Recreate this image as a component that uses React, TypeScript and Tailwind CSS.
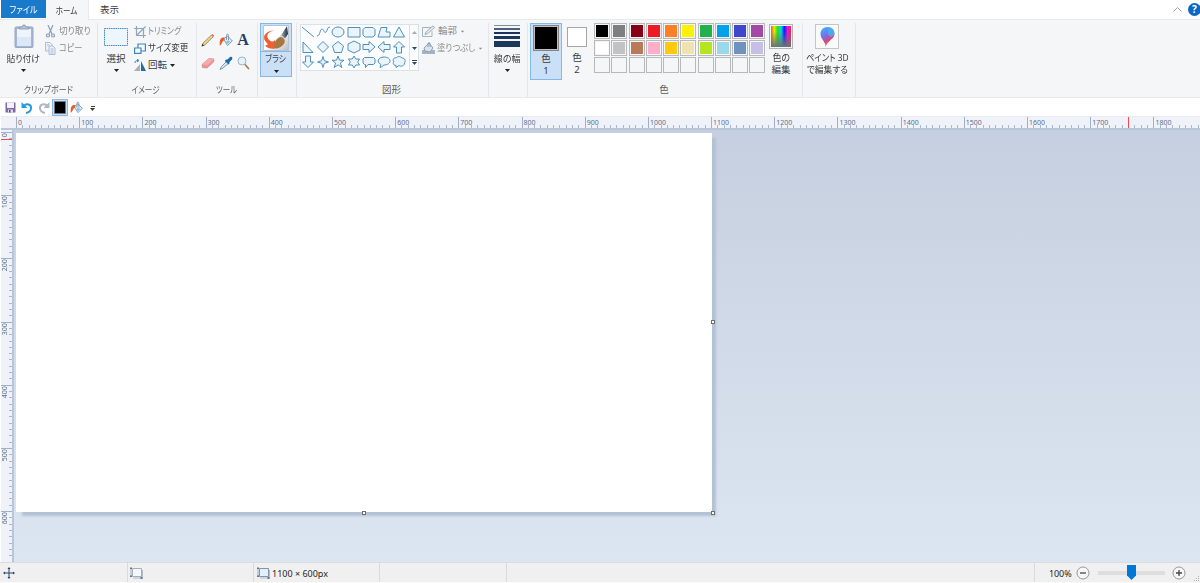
import clsx from "clsx";
import type { ReactNode } from "react";

const UNIT = 63.2;

const paletteTop = [
  '#000000', '#7f7f7f', '#880015', '#ed1c24', '#ff7f27',
  '#fff200', '#22b14c', '#00a2e8', '#3f48cc', '#a349a4',
];
const paletteMiddle = [
  '#ffffff', '#c3c3c3', '#b97a57', '#ffaec9', '#ffc90e',
  '#efe4b0', '#b5e61d', '#99d9ea', '#7092be', '#c8bfe7',
];

const shapes = [
  'M1 2L13 12',
  'M1 11C4 11 4 4 6 4S8 9 10 7S11 2 14 2',
  'M1 7A6 5 0 1 0 13 7A6 5 0 1 0 1 7Z',
  'M1 2.5H13V12H1Z',
  'M3 2.5H11L13 4.5V10L11 12H3L1 10V4.5Z',
  'M4 2.5H10L9 7H13V12H1Z',
  'M7 2L12.500 12H1.500Z',
  'M2 2V12.500H12Z',
  'M7 1.500L12.500 7L7 12.500L1.500 7Z',
  'M7 1.500L12.500 6L10.500 12.500H3.500L1.500 6Z',
  'M7 1L13 4V10L7 13L1 10V4Z',
  'M1 4.500H7V1.500L13 7L7 12.500V9.500H1Z',
  'M13 4.500H7V1.500L1 7L7 12.500V9.500H13Z',
  'M4.500 13V7H1.500L7 1.500L12.500 7H9.500V13Z',
  'M4.500 1V7H1.500L7 12.500L12.500 7H9.500V1Z',
  'M7 1.500L8.300 5.700L12.500 7L8.300 8.300L7 12.500L5.700 8.300L1.500 7L5.700 5.700Z',
  'M7 1L8.500 5.200H13L9.400 8L10.800 12.500L7 9.800L3.200 12.500L4.600 8L1 5.200H5.500Z',
  'M7 1L8.700 4H12.500L10.700 7L12.500 10H8.700L7 13L5.300 10H1.500L3.300 7L1.500 4H5.300Z',
  'M2.500 2.500H11.500L13 4V8L11.500 9.500H6L3.500 12.500V9.500H2.500L1 8V4Z',
  'M4 9.500C-1 7 1 2 7 2C15 2 15 10 7 10C6 10 6 12 3 12.500Z',
  'M4 3C6 1 8 1 10 3C13 3 14 6 12.500 8C12.500 11 9 12 7 10.500L4 12.500V10.500C1 10 .5 8 2 7C0 5 2 2 4 3Z',
];

const Arrow = ({ className }: { className?: string }) => (
  <svg className={clsx("shrink-0", className)} width="5" height="3" viewBox="0 0 5 3">
    <path d="M0 0H5L2.500 3Z" fill="currentColor" />
  </svg>
);

// kana in the UI font are narrower than the kanji, so labels get condensed
const Label = ({ className, children }: { className: string; children: ReactNode }) => (
  <span className={clsx("inline-block", className)}>{children}</span>
);

interface GroupProps {
  width: string;
  label?: ReactNode;
  className?: string;
  children: ReactNode;
}

const Group = ({ width, label, className, children }: GroupProps) => (
  <section className={clsx("flex shrink-0 flex-col border-r border-[#e4e6e9]", width)}>
    <div className={clsx("flex h-[60px] items-start", className)}>{children}</div>
    <div className="flex justify-center pr-[2px] text-[#5c5c5c] leading-[14px]">{label}</div>
  </section>
);

interface BigButtonProps {
  icon: ReactNode;
  label: ReactNode;
  width: string;
  arrow?: boolean;
}

const BigButton = ({ icon, label, width, arrow }: BigButtonProps) => (
  <button className={clsx("flex shrink-0 flex-col items-center pt-px", width)}>
    <span className="flex h-[29px] items-start justify-center">{icon}</span>
    <span className="leading-[12px]">{label}</span>
    {arrow && <Arrow className="mt-[4px] text-[#222]" />}
  </button>
);

const Swatch = ({ color }: { color?: string }) => (
  <span className="block h-[16px] w-[16px] border border-[#b9b9b9] bg-[#f5f6f7] p-px">
    <span className="block h-full w-full" style={{ backgroundColor: color }} />
  </span>
);

const BucketIcon = ({ size = 14 }: { size?: number }) => (
  <svg width={size} height={size} viewBox="0 0 14 14" fill="none">
    <path d="M4.500 6L8.500 3L13.300 8L8.500 12.500Z" fill="#e3eff8" stroke="#6f91ad" strokeWidth=".9" />
    <path d="M7.500 7V2.500C7.500 .6 9.500 .6 9.500 2.500V7" stroke="#7790a7" strokeWidth=".9" />
    <path d="M5.500 4.500C2 4 .3 6 .8 12.500C2.800 12.500 2.500 8.500 5.500 7Z" fill="#e95d2b" />
    <path d="M8.500 7.500L11.500 8L8.500 11L6.800 9Z" fill="#8bbfe5" />
  </svg>
);

const SizeIcon = ({ pale }: { pale?: boolean }) => (
  <svg width="13" height="12" viewBox="0 0 13 12" fill="none">
    <path d="M2.500 1.500H11.500V9.500H2.500Z" fill={pale ? '#f5f7f9' : '#dff1f9'} stroke={pale ? '#a3afc0' : '#8194ab'} />
    <path d="M3 11H12.500V3" stroke="#b0bac8" />
    <path d="M1 1V9" stroke="#8a99ac" strokeWidth=".8" />
    <path d="M0 .5H2V2H0ZM0 8.500H2V10H0ZM10.500 10H12.500V12H10.500Z" fill="#62758d" />
  </svg>
);

const Clipboard = () => (
  <Group width="w-[97px]" label={<Label className="scale-x-[.84]">クリップボード</Label>} className="pl-px">
    <BigButton
      width="w-[43px]"
      label={<Label className="scale-x-[.92]">貼り付け</Label>}
      arrow
      icon={
        <svg width="20" height="25" viewBox="0 0 20 25">
          <rect x="1" y="3" width="18" height="20.500" rx="1" fill="#a7b6d1" stroke="#98a8c5" />
          <path d="M3 5H17V22H3Z" fill="#edf4fc" />
          <path d="M3 13H17V22H3Z" fill="#dce8f6" />
          <path d="M5 5V3H8L9 1H11L12 3H15V5Z" fill="#b7c2d5" stroke="#8796b1" strokeWidth=".8" />
        </svg>
      }
    />
    <div className="flex flex-col text-[#8b8b8b]">
      <button className="flex h-[17px] items-center gap-[4px]">
        <svg className="ml-px" width="9" height="13" viewBox="0 0 9 13" fill="none" stroke="#8e9cb8" strokeWidth="1.200">
          <path d="M2 0L6 9M7 0L3 9" />
          <circle cx="2" cy="10.500" r="1.500" />
          <circle cx="7" cy="10.500" r="1.500" />
        </svg>
        <Label className="origin-left scale-x-[.91]">切り取り</Label>
      </button>
      <button className="flex h-[17px] items-center gap-[3px]">
        <svg width="11" height="13" viewBox="0 0 11 13" fill="#eaf0f8" stroke="#a8b7ce" strokeWidth=".9">
          <path d="M.5 .5H5L7 2.500V9H.5Z" />
          <path d="M4 4H8L10 6V12.500H4Z" />
          <path d="M5.500 7H8.500M5.500 9H8.500M5.500 11H8.500M2 3H4" />
        </svg>
        <Label className="origin-left scale-x-[.86]">コピー</Label>
      </button>
    </div>
  </Group>
);

const ImageTools = () => (
  <Group width="w-[99px]" label={<Label className="scale-x-[.8]">イメージ</Label>} className="pl-[6px]">
    <BigButton
      width="w-[24px]"
      label="選択"
      arrow
      icon={
        <svg className="mt-[4px]" width="24" height="18" viewBox="0 0 24 18">
          <rect x=".5" y=".5" width="23" height="17" fill="#eef6fd" stroke="#3d8ac4" strokeDasharray="1.500 .7" />
        </svg>
      }
    />
    <div className="ml-[6px] flex flex-col">
      <button className="flex h-[17px] items-center gap-[2px] text-[#8b8b8b]">
        <svg width="12" height="12" viewBox="0 0 12 12" fill="none" stroke="#91a4bd" strokeWidth="1.200">
          <path d="M2.500 0V9.500H12M0 2.500H9.500V12M2.500 9.500L11.500 .5" />
        </svg>
        <Label className="origin-left scale-x-[.83]">トリミング</Label>
      </button>
      <button className="flex h-[17px] items-center gap-[2px]">
        <svg width="12" height="11" viewBox="0 0 12 11" fill="#f3faff" stroke="#4188b9" strokeWidth="1.200">
          <path d="M4 1H11.400V8H4Z" />
          <path d="M.6 5H7V10.400H.6Z" />
        </svg>
        <Label className="origin-left scale-x-[.9]">サイズ変更</Label>
      </button>
      <button className="flex h-[16px] items-center gap-[2px]">
        <svg width="12" height="12" viewBox="0 0 12 12">
          <path d="M6 5V12H0Z" fill="#a9b2bb" />
          <path d="M7 2V12H12Z" fill="#286b9d" />
          <path d="M1 4C1 2 2 1.500 4 1.500M3 0L5 1.500L3 3" fill="none" stroke="#2288d8" />
        </svg>
        回転
        <Arrow className="ml-px text-[#222]" />
      </button>
    </div>
  </Group>
);

const Tools = () => (
  <Group width="w-[61px]" label={<Label className="scale-x-[.78]">ツール</Label>} className="pl-[2px] pt-[5px]">
    <div className="grid grid-cols-[18px_18px_16px] grid-rows-[23px_24px] justify-items-center items-center">
      <svg width="14" height="14" viewBox="0 0 14 14">
        <path d="M1 13L2 10.200L10.500 2L12.200 3.700L3.800 12Z" fill="#f0d791" stroke="#8f7440" strokeWidth=".8" />
        <path d="M10.500 2L11.500 1L13.300 2.800L12.200 3.700Z" fill="#d96b6f" />
        <path d="M.5 13.500L1.500 10.800L3.200 12.500Z" fill="#43382b" />
      </svg>
      <BucketIcon />
      <span className="font-['Liberation_Serif'] text-[16px] font-bold leading-none text-[#1f3f65]">A</span>
      <svg width="14" height="14" viewBox="0 0 14 14">
        <path d="M1 8.500L8 2.500L13 3L12.500 6L6 12L1.500 11.500Z" fill="#ee9496" stroke="#d08486" strokeWidth=".7" />
        <path d="M1 8.500L6.500 9L13 3L8 2.500Z" fill="#f4adac" />
      </svg>
      <svg width="14" height="14" viewBox="0 0 14 14">
        <path d="M8 5L10 7L4 12L1 13.500L2.500 10.500Z" fill="#d7e7f1" stroke="#66849b" strokeWidth=".8" />
        <path d="M7 3.500L8.500 3.500L11 1C13 0 14 2 13 3.500L10.500 6V7.500L9.500 8.500L5.800 5Z" fill="#1c69a8" />
      </svg>
      <svg width="13" height="14" viewBox="0 0 13 14">
        <path d="M8 8.500L11.500 12.500" stroke="#aa7e4b" strokeWidth="1.800" strokeLinecap="round" />
        <circle cx="5" cy="5" r="4" fill="#e4f3fb" stroke="#a3b3bd" />
      </svg>
    </div>
  </Group>
);

const Brushes = () => (
  <Group width="w-[39px]" className="pl-[2px]">
    <button className="flex h-[54px] w-[32px] flex-col items-center border border-[#84b8ec] bg-[#c9e0f7]">
      <span className="flex h-[28px] w-full justify-center border-b border-[#84b8ec] pt-px">
        <svg width="26" height="26" viewBox="0 0 26 26">
          <defs>
            <linearGradient id="tile" x1="0" y1="0" x2="1" y2="1">
              <stop offset=".5" stopColor="#fff" />
              <stop offset="1" stopColor="#b8bec2" />
            </linearGradient>
            <linearGradient id="handle">
              <stop stopColor="#b8c3ca" />
              <stop offset="1" stopColor="#172d45" />
            </linearGradient>
          </defs>
          <path d="M.5 .5H25.500V25.500H.5Z" fill="url(#tile)" stroke="#b8c3cc" />
          <path d="M11 5.500C2 6 -1 12 2.500 16.500C5 19.500 6 20 2 20.500C5 24 12 25 14 22L12 15C9 18 7 16 5 13.500C3 10 5 7 11 5.500Z" fill="#ed6034" />
          <path d="M17 12L24 1L25 9L21 15Z" fill="url(#handle)" />
          <path d="M16 12L18 10L22.500 13.500L21 16Z" fill="#d9dddd" />
          <path d="M11 23C11 17 14 12 18 12C22 13 23 17 20 20C17 23 14 24 11 23Z" fill="#a77643" />
        </svg>
      </span>
      <span className="mt-px leading-[12px]"><Label className="scale-x-[.83]">ブラシ</Label></span>
      <Arrow className="mt-[5px] text-[#222]" />
    </button>
  </Group>
);

const ShapeTools = () => (
  <Group width="w-[192px]" label="図形" className="pl-[3px] pt-px">
    <div className="flex h-[47px] w-[119px] shrink-0 overflow-hidden border border-[#dce1e6] bg-[#fbfcfd]">
      <div className="grid w-[108px] shrink-0 grid-cols-[repeat(7,15.2px)] grid-rows-[repeat(3,15px)]">
        {shapes.map((d, i) => (
          <svg key={i} width="14" height="14" viewBox="0 0 14 14">
            <path d={d} fill={i < 2 ? 'none' : '#eaf5fb'} stroke="#4989b6" strokeWidth=".95" />
          </svg>
        ))}
      </div>
      <div className="flex grow flex-col items-center border-l border-[#dce1e6] text-[#33475c]">
        <Arrow className="mt-[6px] rotate-180 text-[#a6abb2]" />
        <Arrow className="mt-[13px]" />
        <span className="mt-[10px] h-px w-[5px] bg-current" />
        <Arrow className="mt-px" />
      </div>
    </div>
    <div className="ml-[3px] flex flex-col text-[#8b8b8b]">
      <button className="flex h-[14px] items-center gap-[3px]">
        <svg width="13" height="12" viewBox="0 0 13 12" fill="none">
          <path d="M10 6V11.500H.5V2.500H9" stroke="#a5b4c5" />
          <path d="M3 9.500L4 7L11 .8L12.500 2.500L5.500 8.700Z" fill="#e8edf2" stroke="#8999ae" strokeWidth=".8" />
        </svg>
        輪郭
        <Arrow className="scale-75" />
      </button>
      <button className="flex h-[20px] items-center gap-[2px]">
        <svg width="13" height="12" viewBox="0 0 13 12">
          <path d="M0 8H13V12H0Z" fill="#a4b3c7" />
          <path d="M2 6L7 1L11 6L8 10L3 9Z" fill="#dbe3ed" stroke="#8d9eb5" />
          <path d="M6 5V2C6 0 8 0 8 2V5" fill="none" stroke="#8d9eb5" />
        </svg>
        <Label className="-mr-[5px] origin-left scale-x-[.88]">塗りつぶし</Label>
        <Arrow className="scale-75" />
      </button>
    </div>
  </Group>
);

const Colors = () => (
  <Group width="w-[275px]" label="色" className="pl-[2px]">
    <button className="flex h-[57px] w-[32px] flex-col items-center border border-[#84b8ec] bg-[#c9e0f7] pt-px">
      <span className="h-[26px] w-[26px] border border-[#858585] bg-[#bfbfbf] p-px">
        <span className="block h-full w-full bg-black" />
      </span>
      <span className="mt-[2px] leading-[12px]">色</span>
      <span className="leading-[12px]">1</span>
    </button>
    <button className="ml-[5px] flex w-[20px] flex-col items-center pt-[4px]">
      <span className="h-[20px] w-[20px] border border-[#a6a6a6] bg-white" />
      <span className="mt-[5px] leading-[12px]">色</span>
      <span className="leading-[12px]">2</span>
    </button>
    <div className="ml-[7px] grid grid-cols-[repeat(10,17.250px)] grid-rows-[17px_17px_16px]">
      {paletteTop.map((color) => <Swatch key={color} color={color} />)}
      {paletteMiddle.map((color) => <Swatch key={color} color={color} />)}
      {paletteTop.map((color) => <Swatch key={color} />)}
    </div>
    <button className="ml-[2px] flex w-[25px] flex-col items-center pt-px">
      <span className="h-[25px] w-[24px] border border-[#b3b3b3] p-px">
        <span className="block h-full bg-[linear-gradient(transparent_25%,#6a7472),linear-gradient(90deg,#f05a28,#e4ee00,#23dd21,#00dce1,#1515ff,#e419d5,#ff1739)]" />
      </span>
      <span className="mt-[3px] leading-[12px]"><Label className="scale-x-[.94]">色の</Label></span>
      <span className="leading-[12px]">編集</span>
    </button>
  </Group>
);

const Ribbon = () => (
  <div className="flex h-[79px] border-y border-[#e8e9ea] bg-[#f5f6f7] pl-px pt-[3px]">
    <Clipboard />
    <ImageTools />
    <Tools />
    <Brushes />
    <ShapeTools />
    <Group width="w-[39px]" className="pl-[3px]">
      <BigButton
        width="w-[30px]"
        label={<Label className="scale-x-[.94]">線の幅</Label>}
        arrow
        icon={
          <span className="mt-px flex w-[26px] flex-col">
            <span className="h-px bg-[#7d918f]" />
            <span className="mt-[2px] h-[2px] bg-[#4b5e80]" />
            <span className="mt-[2px] h-[2px] bg-[#1d315c]" />
            <span className="mt-[2px] h-[3px] bg-[#1d385d]" />
            <span className="mt-[2px] h-[6px] bg-[#1d385d]" />
          </span>
        }
      />
    </Group>
    <Colors />
    <Group width="w-[53px]" className="justify-center pr-[3px]">
      <button className="flex flex-col items-center pt-px">
        <span className="flex h-[25px] w-[24px] items-center justify-center border border-[#c5c5c5] bg-[#fafafa]">
          <svg width="15" height="20" viewBox="0 0 15 20">
            <defs>
              <linearGradient id="pin" x1=".2" y1="0" x2=".6" y2="1">
                <stop stopColor="#35b8f4" />
                <stop offset=".4" stopColor="#7970ec" />
                <stop offset=".7" stopColor="#d4487e" />
                <stop offset="1" stopColor="#f5b33a" />
              </linearGradient>
            </defs>
            <path d="M7.500 0C12 0 14.500 3 14.500 7C14.500 12 8 13 5.500 20C6 15 .5 12 .5 7C.5 3 3 0 7.500 0Z" fill="url(#pin)" />
            <path d="M8 0C13 0 15 4 14 8C12 11 9 10 8 7C7 4 10 3 8 0Z" fill="#30c7f2" opacity=".65" />
          </svg>
        </span>
        <span className="mt-[3px] leading-[12px]"><Label className="scale-x-[.88]">ペイント 3D</Label></span>
        <span className="leading-[12px]"><Label className="scale-x-[.92]">で編集する</Label></span>
      </button>
    </Group>
  </div>
);

const QuickAccess = () => (
  <div className="flex h-[17px] items-center pl-[5px]">
    <svg width="11" height="11" viewBox="0 0 11 11">
      <path d="M.5 .5H10.500V10.500H.5Z" fill="#8068a6" />
      <path d="M2 .5H9V6H2Z" fill="#f3f3f8" />
      <path d="M3 7.500H8V10.500H3Z" fill="#dcdde8" />
      <path d="M4 8H5.500V10.500H4Z" fill="#54457c" />
    </svg>
    <svg className="ml-[5px]" width="12" height="12" viewBox="0 0 12 12" fill="none" stroke="#249bdc" strokeWidth="2">
      <path d="M3 3.500C7 1 10.500 3 10 6.500C9.700 9 7.500 10.500 5 11" />
      <path d="M.5 0V6H6.500Z" fill="#249bdc" stroke="none" />
    </svg>
    <svg className="ml-[5px]" width="12" height="12" viewBox="0 0 12 12" fill="none" stroke="#acb8c8" strokeWidth="2">
      <path d="M9 3.500C5 1 1.500 3 2 6.500C2.300 9 4.500 10.500 7 11" />
      <path d="M11.500 0V6H5.500Z" fill="#acb8c8" stroke="none" />
    </svg>
    <span className="ml-[2px] h-[17px] w-[16px] border border-[#84b8ec] bg-[#c9e0f7] p-px">
      <span className="block h-full border border-[#777] bg-black" />
    </span>
    <span className="ml-[2px]"><BucketIcon size={13} /></span>
    <span className="ml-[7px] flex flex-col items-center gap-px pt-px">
      <span className="h-px w-[4px] bg-[#444]" />
      <Arrow />
    </span>
  </div>
);

const TopRuler = () => (
  <div className="relative ml-px flex h-[14px] overflow-hidden border-b-2 border-t border-b-[#b9c5d8] border-t-[#e8ebf0] bg-[#f0f2f9] pl-[15px]">
    {Array.from({ length: 19 }, (_, i) => (
      <div key={i} className="flex shrink-0 flex-col justify-between border-l border-[#9fb0c8]" style={{ width: UNIT }}>
        <span className="h-[8px] pl-px text-[7px] leading-[11px] text-[#5e6f8c]">{i * 100}</span>
        <span className="flex h-[3px] justify-evenly">
          {Array.from({ length: 9 }, (_, n) => (
            <span key={n} className="w-px bg-[#a9b8ce]" />
          ))}
        </span>
      </div>
    ))}
    <span className="absolute left-[1127px] top-0 h-[12px] w-px bg-[#f04b4b]" />
  </div>
);

const SideRuler = () => (
  <div className="relative ml-px flex w-[13px] shrink-0 flex-col overflow-hidden border-r-2 border-[#b9c5d8] bg-[#f0f2f9] pt-[2px]">
    {Array.from({ length: 7 }, (_, i) => (
      <div key={i} className="flex shrink-0 justify-between border-t border-[#9fb0c8]" style={{ height: UNIT }}>
        <span className="w-[8px] rotate-180 text-right text-[7px] leading-[8px] text-[#5e6f8c] [writing-mode:vertical-rl]">
          {i * 100}
        </span>
        <span className="flex w-[3px] flex-col justify-evenly">
          {Array.from({ length: 9 }, (_, n) => (
            <span key={n} className="h-px bg-[#a9b8ce]" />
          ))}
        </span>
      </div>
    ))}
    <span className="absolute left-0 top-[9px] z-10 h-px w-[12px] bg-[#f04b4b]" />
  </div>
);

const Handle = ({ className }: { className: string }) => (
  <span className={clsx("absolute h-[4px] w-[4px] border border-[#6d6d6d] bg-white", className)} />
);

const Workspace = () => (
  <div className="flex h-[432px]">
    <SideRuler />
    <main className="grow bg-linear-to-b from-[#c5cfdf] to-[#dce6f2] pl-[2px] pt-[3px]">
      <div className="relative h-[379px] w-[696px]">
        <div className="absolute left-[6px] top-[5px] h-[378px] w-[694px] bg-[#b3c1d5] blur-[1px]" />
        <div className="relative h-full bg-white" />
        <Handle className="left-[695px] top-[187px]" />
        <Handle className="left-[346px] top-[378px]" />
        <Handle className="left-[695px] top-[378px]" />
      </div>
    </main>
  </div>
);

const StatusBar = () => (
  <footer className="flex h-[21px] items-center border-b border-t border-b-[#fafafa] border-t-[#dcdcdc] bg-[#f0f0f0] font-['Noto_Sans'] text-[9px] text-[#262626]">
    <div className="flex h-full w-[128px] items-center border-r border-[#dadada] pl-[3px]">
      <svg width="12" height="12" viewBox="0 0 12 12" fill="#254568">
        <path d="M6 1V11M1 6H11" stroke="#254568" />
        <path d="M4.500 2L6 0L7.500 2ZM4.500 10L6 12L7.500 10ZM2 4.500L0 6L2 7.500ZM10 4.500L12 6L10 7.500Z" />
      </svg>
    </div>
    <div className="flex h-full w-[126px] items-center border-r border-[#dadada] pl-[2px]">
      <SizeIcon pale />
    </div>
    <div className="flex h-full w-[126px] items-center gap-[2px] border-r border-[#dadada] pl-[3px]">
      <SizeIcon />
      <span className="pt-[2px]">1100 × 600px</span>
    </div>
    <div className="h-full w-[127px] border-r border-[#dadada]" />
    <div className="h-full w-[528px] border-r border-[#dadada]" />
    <div className="flex h-full grow items-center pl-[14px]">
      <span className="w-[27px] pt-[2px] tracking-[-0.1px]">100%</span>
      <svg width="14" height="14" viewBox="0 0 14 14" fill="#f7f7f7" stroke="#999">
        <circle cx="7" cy="7" r="6" />
        <path d="M4 7H10" stroke="#444" strokeWidth="1.300" />
      </svg>
      <div className="ml-[8px] flex h-[15px] w-[67px] items-center justify-center bg-[linear-gradient(#dedede,#dedede)] bg-[length:100%_4px] bg-center bg-no-repeat">
        <svg width="9" height="15" viewBox="0 0 9 15">
          <path d="M0 0H9V10.500L4.500 15L0 10.500Z" fill="#0078d7" />
        </svg>
      </div>
      <svg className="ml-[7px]" width="14" height="14" viewBox="0 0 14 14" fill="#f7f7f7" stroke="#999">
        <circle cx="7" cy="7" r="6" />
        <path d="M4 7H10M7 4V10" stroke="#444" strokeWidth="1.300" />
      </svg>
      <svg className="ml-auto self-end" width="6" height="6" viewBox="0 0 6 6" fill="#b5b5b5">
        <path d="M4 0H5V1H4ZM2 2H3V3H2ZM4 2H5V3H4ZM0 4H1V5H0ZM2 4H3V5H2ZM4 4H5V5H4Z" />
      </svg>
    </div>
  </footer>
);

const App = () => {
  return (
    <div className="h-[583px] w-[1200px] overflow-hidden bg-white font-['Noto_Sans','Noto_Sans_CJK_JP',sans-serif] text-[9.5px] text-[#3c3c3c] whitespace-nowrap [font-feature-settings:'palt']">
      <nav className="flex h-[19px] pl-px leading-[19px]">
        <button className="h-[18px] w-[45px] bg-[#1979ca] text-white">
          <Label className="scale-x-[.86]">ファイル</Label>
        </button>
        <button className="relative z-10 h-[20px] w-[43px] border-r border-[#e8e9ea] bg-[#f5f6f7]">
          <Label className="scale-x-[.8]">ホーム</Label>
        </button>
        <button className="w-[41px]">表示</button>
        <div className="ml-auto flex items-center">
          <svg width="9" height="5" viewBox="0 0 9 5" fill="none" stroke="#a2a2a2">
            <path d="M.5 4.500L4.500 .5L8.500 4.500" />
          </svg>
          <span className="-mr-px ml-[6px] h-[13px] w-[13px] rounded-full bg-[#0b68c3] text-center text-[10px] font-bold leading-[13px] text-white">
            ?
          </span>
        </div>
      </nav>
      <Ribbon />
      <div className="pt-px">
        <QuickAccess />
      </div>
      <TopRuler />
      <Workspace />
      <StatusBar />
    </div>
  );
};

export default App;
